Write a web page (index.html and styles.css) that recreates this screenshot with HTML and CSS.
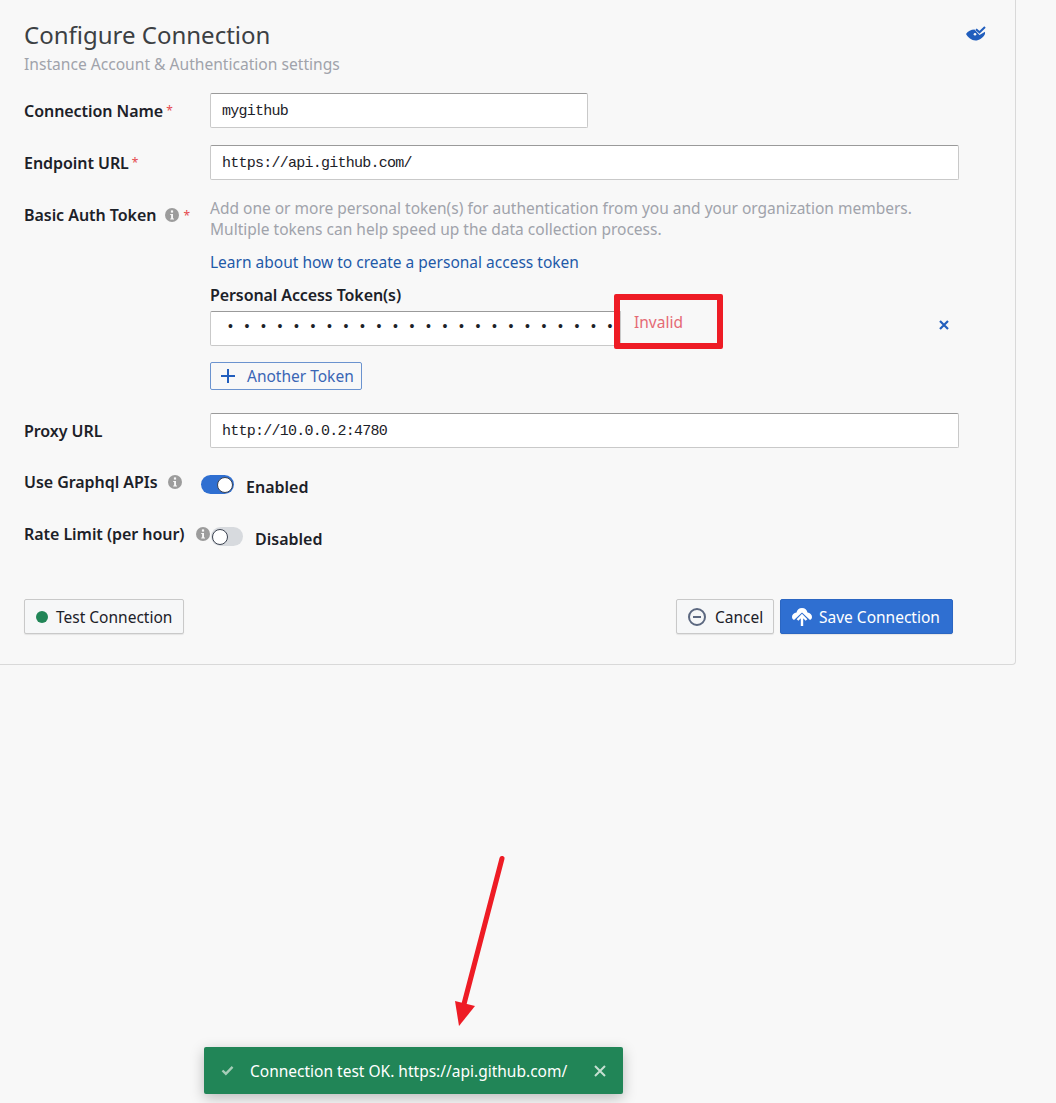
FILE: index.html
```html
<!DOCTYPE html>
<html lang="en">
<head>
<meta charset="utf-8">
<title>Configure Connection</title>
<link rel="stylesheet" href="styles.css">
</head>
<body>
<main class="panel">
  <header class="head">
    <div>
      <h1 class="title">Configure Connection</h1>
      <p class="subtitle">Instance Account &amp; Authentication settings</p>
    </div>
    <svg class="eye" viewBox="0 0 20 16" width="20" height="16" aria-hidden="true">
      <path fill="#215ebd" d="M0 8 C2 5 5 3.500 8.500 3.500 L13.500 9 L19 5.800 L19 8 C17 12 13 14.500 9.500 14.500 C5.500 14.500 2 11.500 0 8Z"/>
      <circle cx="9" cy="8.300" r="1.300" fill="#f8f8f8"/>
      <path fill="none" stroke="#215ebd" stroke-width="2" d="M10 3.200 L13.500 6.300 L19 1"/>
    </svg>
  </header>

  <div class="row row-input">
    <label class="label">Connection Name<span class="req">*</span></label>
    <input class="input input-name" value="mygithub">
  </div>
  <div class="row row-input">
    <label class="label">Endpoint URL<span class="req">*</span></label>
    <input class="input input-wide" value="https://api.github.com/">
  </div>
  <div class="row row-auth">
    <label class="label label-auth">Basic Auth Token<svg class="info info-auth" viewBox="0 0 14 14"><use href="#i"/></svg><span class="req">*</span></label>
    <div class="auth">
      <p class="help">Add one or more personal token(s) for authentication from you and your organization members.<br>Multiple tokens can help speed up the data collection process.</p>
      <a class="link" href="#">Learn about how to create a personal access token</a>
      <div class="pat-label">Personal Access Token(s)</div>
      <div class="pat-row">
        <div class="pat-input"><span class="dots">••••••••••••••••••••••••</span></div>
        <span class="invalid">Invalid</span>
        <svg class="remove" viewBox="0 0 10 10" width="10" height="10"><path d="M1 1 L9 9 M9 1 L1 9" stroke="#215ebd" stroke-width="2.200" fill="none"/></svg>
      </div>
      <button class="btn-outline"><svg viewBox="0 0 14 14" width="14" height="14"><path d="M7 0 V14 M0 7 H14" stroke="#215ebd" stroke-width="2" fill="none"/></svg>Another Token</button>
    </div>
  </div>
  <div class="row row-input row-proxy">
    <label class="label">Proxy URL</label>
    <input class="input input-wide" value="http://10.0.0.2:4780">
  </div>
  <div class="row row-switch">
    <label class="label">Use Graphql APIs<svg class="info info-gql" viewBox="0 0 14 14"><use href="#i"/></svg></label>
    <span class="switch switch-on"><span class="knob"></span></span>
    <span class="switch-text">Enabled</span>
  </div>
  <div class="row row-switch row-rate">
    <label class="label">Rate Limit (per hour)<svg class="info info-rate" viewBox="0 0 14 14"><use href="#i"/></svg></label>
    <span class="switch switch-off"><span class="knob"></span></span>
    <span class="switch-text text-off">Disabled</span>
  </div>

  <footer class="actions">
    <button class="btn btn-test"><span class="dot"></span>Test Connection</button>
    <div class="actions-right">
      <button class="btn btn-cancel"><svg viewBox="0 0 20 20" width="20" height="20"><circle cx="10" cy="10" r="8" fill="none" stroke="#5c6880" stroke-width="2"/><path d="M6 10 H14" stroke="#5c6880" stroke-width="2"/></svg>Cancel</button>
      <button class="btn btn-save"><svg viewBox="0 0 20 18" width="20" height="18"><path fill="#fff" d="M10 0 C13 0 15 2 15.500 4.500 C18 5 20 6.500 20 9 C20 10.500 19 11.500 18 12 L10 4.500 L2 12 C1 11.500 0 10.500 0 9 C0 6.500 2 5 4.500 4.500 C5 2 7 0 10 0Z"/><path d="M10 7.500 V18 M5.500 12 L10 7.500 L14.500 12" fill="none" stroke="#fff" stroke-width="2.400"/></svg>Save Connection</button>
    </div>
  </footer>
</main>

<div class="red-box"></div>
<svg class="arrow" viewBox="0 0 60 180" width="60" height="180" aria-hidden="true">
  <path d="M50 6.500 L12 152" stroke="#ee1c25" stroke-width="5" stroke-linecap="round" fill="none"/>
  <path d="M7 174 L3 149 L23 154Z" fill="#ee1c25"/>
</svg>
<div class="toast">
  <svg viewBox="0 0 14 12" width="13" height="11"><path d="M1.500 6 L5.200 9.500 L12.500 2" fill="none" stroke="#a6cdb8" stroke-width="2.600"/></svg>
  <span class="toast-text">Connection test OK. https://api.github.com/</span>
  <svg class="toast-x" viewBox="0 0 12 12" width="12" height="12"><path d="M1 1 L11 11 M11 1 L1 11" stroke="#c5dfd1" stroke-width="2" fill="none"/></svg>
</div>

<svg class="defs" width="0" height="0"><defs><g id="i"><circle cx="7" cy="7" r="7" fill="#9c9c9c"/><rect x="5.900" y="2.400" width="2.200" height="2.200" fill="#f8f8f8"/><path d="M5.200 6 H8 V10.400 H9 V11.500 H5.200 V10.400 H6.100 V7.100 H5.200Z" fill="#f8f8f8"/></g></defs></svg>
</body>
</html>
```
FILE: styles.css
```css
html, body { margin: 0; padding: 0; }
body {
  position: relative;
  height: 1103px;
  overflow: hidden;
  background: #f8f8f8;
  font-family: "Noto Sans", "Open Sans", sans-serif;
  font-size: 15.5px;
  color: #1c2128;
}
.panel {
  box-sizing: border-box;
  width: 1016px;
  height: 665px;
  padding: 20px 56px 0 24px;
  border: solid #d9d9d9;
  border-width: 0 1px 1px 0;
  border-radius: 0 0 4px 0;
}
.head { display: flex; justify-content: space-between; height: 73px; margin-right: -27px; }
.title { margin: 0; font-size: 24px; line-height: 30px; font-weight: 400; color: #3c4043; }
.subtitle { margin: 0; font-size: 15.6px; line-height: 28px; color: #a0a3ab; }
.eye { margin: 6px 0 0; }
.row { display: flex; }
.row-input { align-items: center; height: 35px; margin-bottom: 17px; }
.label { display: flex; align-items: center; flex: 0 0 186px; box-sizing: border-box; font-weight: 600; font-size: 16px; letter-spacing: -0.05px; white-space: nowrap; }
.req { color: #e5484d; font-weight: 400; margin-left: 3px; font-size: 12px; }
.input {
  box-sizing: border-box;
  height: 35px;
  padding: 2px 11px 0;
  background: #fff;
  border: 1px solid #c9c9c9;
  border-top-color: #9a9a9a;
  border-radius: 2px;
  font-family: "Liberation Mono", monospace;
  font-size: 15px;
  letter-spacing: -0.75px;
  color: #1c2128;
  outline: none;
}
.input-name { width: 378px; }
.input-wide { width: 749px; }
.row-auth { height: 216px; }
.label-auth { align-self: flex-start; height: 36px; }
.info { flex: none; width: 14px; height: 14px; }
.info-auth { margin-left: 9px; margin-right: 1px; }
.info-gql { margin-left: 10px; }
.info-rate { margin-left: 11px; }
.auth { flex: 1; position: relative; }
.help { margin: 0; padding-top: 1px; line-height: 21px; color: #a0a3ab; white-space: nowrap; }
.link { display: block; margin-top: 12px; line-height: 21px; color: #1f5aa8; text-decoration: none; }
.pat-label { margin-top: 12px; font-weight: 600; font-size: 16px; line-height: 21px; letter-spacing: -0.1px; }
.pat-row { display: flex; align-items: center; height: 35px; margin-top: 5px; }
.pat-input {
  box-sizing: border-box;
  width: 411px;
  height: 35px;
  padding-left: 17px;
  white-space: nowrap;
  background: #fff;
  border: 1px solid #c9c9c9;
  border-top-color: #9a9a9a;
  border-radius: 2px 0 0 2px;
}
.dots { font-family: "Liberation Sans", sans-serif; font-size: 14px; line-height: 29px; letter-spacing: 11.6px; color: #1c2128; }
.invalid { margin-left: 13px; margin-top: -13px; color: #e56a75; width: 305px; }
.remove { margin-top: -7px; }
.btn-outline {
  display: flex;
  align-items: center;
  gap: 12px;
  box-sizing: border-box;
  height: 28px;
  margin-top: 16px;
  padding: 0 7px 0 10px;
  background: transparent;
  border: 1px solid #6b93cf;
  border-radius: 2px;
  font: inherit;
  color: #3a66b5;
}
.row-proxy { margin-bottom: 0; }
.row-switch { align-items: flex-start; height: 52px; }
.row-proxy + .row-switch { margin-top: 19px; }
.row-switch .label { flex: none; height: 30px; line-height: 30px; }
.row-proxy + .row-switch .label { width: 177px; }
.row-rate .label { width: 187px; }
.switch { position: relative; flex: none; width: 33px; height: 19px; margin-top: 8px; border-radius: 10px; }
.switch-on { background: #2f6fd1; }
.switch-off { width: 32px; background: #d7dade; }
.knob { position: absolute; top: 1.5px; box-sizing: border-box; width: 16px; height: 16px; background: #fff; border: 1px solid #3b4250; border-radius: 50%; }
.switch-on .knob { right: 1px; }
.switch-off .knob { left: 1px; }
.switch-text { margin-left: 12px; margin-top: 8px; font-weight: 600; font-size: 16px; line-height: 24px; }
.actions { display: flex; justify-content: space-between; margin-top: 28px; margin-right: 6px; }
.actions-right { display: flex; gap: 6px; }
.btn {
  display: flex;
  align-items: center;
  box-sizing: border-box;
  height: 35px;
  font: inherit;
  border-radius: 2px;
  color: #1c2128;
  background: #f6f7f8;
  border: 1px solid #c9c9c9;
  box-shadow: 0 1px 1px rgba(0,0,0,.08);
}
.btn-test { width: 160px; padding: 0 0 0 11px; gap: 8px; }
.dot { width: 12px; height: 12px; border-radius: 50%; background: #218557; }
.btn-cancel { width: 98px; padding: 0 0 0 10px; gap: 8px; }
.btn-save { width: 173px; padding: 0 0 0 11px; gap: 7px; background: #2f6fd1; border-color: #2b66c2; color: #fff; }
.red-box {
  position: absolute;
  left: 614px;
  top: 294px;
  width: 97px;
  height: 43px;
  border: 6px solid #ee1c25;
  border-radius: 2px;
  box-sizing: content-box;
}
.arrow { position: absolute; left: 452px; top: 852px; }
.toast {
  position: absolute;
  left: 204px;
  top: 1047px;
  box-sizing: border-box;
  display: flex;
  align-items: center;
  width: 419px;
  height: 47px;
  padding: 0 17px;
  background: #218557;
  border-radius: 2px;
  box-shadow: 0 4px 14px rgba(0,0,0,.25);
  color: #fff;
}
.toast-text { margin-left: 16px; white-space: nowrap; }
.toast-x { margin-left: auto; }
.defs { position: absolute; }
```
